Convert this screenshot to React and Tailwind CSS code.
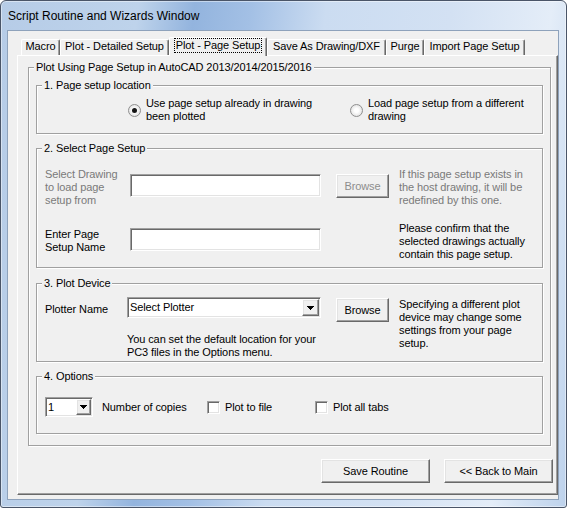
import React from "react";

const raised =
  "border border-t-white border-l-white border-r-[#696969] border-b-[#696969] shadow-[inset_-1px_-1px_0_#a0a0a0,inset_1px_1px_0_#e3e3e3]";
const sunken =
  "border border-t-[#a0a0a0] border-l-[#a0a0a0] border-r-white border-b-white shadow-[inset_1px_1px_0_#696969,inset_-1px_-1px_0_#e3e3e3]";

function Arrow() {
  return (
    <svg width="7" height="4" viewBox="0 0 7 4" shapeRendering="crispEdges">
      <path d="M0 0h7v1h-1v1h-1v1h-1v1h-1v-1h-1v-1h-1v-1h-1z" fill="#000" />
    </svg>
  );
}

function Combo({ className, text, btn }) {
  return (
    <div className={`${sunken} bg-white p-[1px] flex items-stretch ${className}`}>
      <div className="flex-1 pl-[1px] flex items-center whitespace-nowrap">{text}</div>
      <div className={`${raised} bg-[#f0f0f0] ${btn} flex items-center justify-center`}>
        <Arrow />
      </div>
    </div>
  );
}

function Btn({ className, children, disabled }) {
  return (
    <button
      type="button"
      className={`${raised} bg-[#f0f0f0] flex items-center justify-center leading-[13px] ${
        disabled ? "text-[#8d8d8d]" : "text-black"
      } ${className}`}
    >
      {children}
    </button>
  );
}

function Radio({ checked }) {
  return (
    <div className="w-[13px] h-[13px] shrink-0 rounded-full border border-[#8f8f8f] bg-[radial-gradient(circle_at_50%_50%,#ffffff_25%,#d6d6d6_100%)] flex items-center justify-center">
      {checked && <div className="w-[5px] h-[5px] rounded-full bg-[#151515]" />}
    </div>
  );
}

function Check() {
  return <div className={`${sunken} w-[13px] h-[13px] shrink-0 bg-white`} />;
}

function Group({ label, className, children }) {
  return (
    <div
      className={`border border-[#a0a0a0] shadow-[inset_1px_1px_0_#fff,1px_1px_0_#fff] ${className}`}
    >
      <div className="-mt-[7px] ml-[5px] px-[2px] w-fit bg-[#f0f0f0] leading-[13px] whitespace-nowrap">
        {label}
      </div>
      {children}
    </div>
  );
}

function Tab({ w, children }) {
  return (
    <div
      className={`${w} h-[16px] rounded-t-[2px] border-t border-l border-r border-t-white border-l-white border-r-[#696969] shadow-[inset_-1px_0_0_#a0a0a0] flex justify-center leading-[13px] pt-[0px] whitespace-nowrap`}
    >
      {children}
    </div>
  );
}

function SelTab({ w, children }) {
  return (
    <div
      className={`${w} h-[19px] -mb-[1px] rounded-t-[2px] bg-[#f0f0f0] border-t border-l border-r border-t-white border-l-white border-r-[#696969] shadow-[inset_-1px_0_0_#a0a0a0] flex justify-center whitespace-nowrap`}
    >
      <span className="h-fit border border-dotted border-black px-[1px] leading-[13px]">{children}</span>
    </div>
  );
}

export default function App() {
  return (
    <div className="w-[567px] h-[508px] overflow-hidden bg-white">
      <div className="w-[567px] h-[508px] rounded-t-[6px] rounded-b-[3px] border border-[#4a5568] bg-[linear-gradient(97deg,#b6cce7_0%,#bed3eb_22%,#93b4de_31%,#a3c0e5_40%,#cbdcf1_52%,#d3e1f3_72%,#e4edf8_88%,#bdd2ec_100%)] shadow-[inset_0_0_0_1px_rgba(255,255,255,0.45)] font-['Liberation_Sans',Arial,sans-serif] text-black">
        <div className="h-[29px] pl-[7px] flex items-center text-[12px] leading-[14px]">
          Script Routine and Wizards Window
        </div>
        <div className="ml-[6px] w-[552px] h-[470px] border border-[#8ea2bb] bg-[#f0f0f0] text-[11px] leading-[13px] tracking-[-0.1px]">
          <div className="pl-[9px] pt-[6px]">
            <div className="relative z-10 flex items-end h-[18px] pl-[4px]">
              <Tab w="w-[39px]">Macro</Tab>
              <Tab w="w-[109px]">Plot - Detailed Setup</Tab>
              <SelTab w="w-[98px]">Plot - Page Setup</SelTab>
              <Tab w="w-[119px]">Save As Drawing/DXF</Tab>
              <Tab w="w-[38px]">Purge</Tab>
              <Tab w="w-[101px]">Import Page Setup</Tab>
            </div>
            <div className="w-[541px] h-[440px] border border-t-white border-l-white border-r-[#696969] border-b-[#696969] shadow-[inset_-1px_-1px_0_#a0a0a0]">
              <div className="pl-[10px] pt-[11px]">
                <Group
                  label="Plot Using Page Setup in AutoCAD 2013/2014/2015/2016"
                  className="w-[523px] h-[379px]"
                >
                  <div className="pl-[7px] pt-[11px] flex flex-col">
                    <Group label="1. Page setup location" className="w-[507px] h-[49px]">
                      <div className="flex pt-[5px]">
                        <div className="ml-[91px] w-[222px] flex items-center gap-[5px]">
                          <Radio checked />
                          <div className="whitespace-nowrap">
                            Use page setup already in drawing
                            <br />
                            been plotted
                          </div>
                        </div>
                        <div className="flex items-center gap-[5px]">
                          <Radio />
                          <div className="whitespace-nowrap">
                            Load page setup from a different
                            <br />
                            drawing
                          </div>
                        </div>
                      </div>
                    </Group>

                    <Group label="2. Select Page Setup" className="mt-[14px] w-[507px] h-[120px]">
                      <div className="pt-[13px] pl-[8px]">
                        <div className="flex items-start">
                          <div className="w-[85px] text-[#7a7a7a] whitespace-nowrap">
                            Select Drawing
                            <br />
                            to load page
                            <br />
                            setup from
                          </div>
                          <div className={`${sunken} mt-[6px] w-[191px] h-[23px] bg-white`} />
                          <Btn disabled className="mt-[6px] ml-[15px] w-[53px] h-[24px]">
                            Browse
                          </Btn>
                          <div className="ml-[10px] text-[#7a7a7a] whitespace-nowrap">
                            If this page setup exists in
                            <br />
                            the host drawing, it will be
                            <br />
                            redefined by this one.
                          </div>
                        </div>
                        <div className="flex items-start mt-[15px]">
                          <div className="mt-[6px] w-[85px] whitespace-nowrap">
                            Enter Page
                            <br />
                            Setup Name
                          </div>
                          <div className={`${sunken} mt-[6px] w-[191px] h-[23px] bg-white`} />
                          <div className="ml-[78px] whitespace-nowrap">
                            Please confirm that the
                            <br />
                            selected drawings actually
                            <br />
                            contain this page setup.
                          </div>
                        </div>
                      </div>
                    </Group>

                    <Group label="3. Plot Device" className="mt-[15px] w-[507px] h-[79px]">
                      <div className="pt-[7px] pl-[8px] flex items-start">
                        <div className="mt-[6px] w-[82px] whitespace-nowrap">Plotter Name</div>
                        <div className="w-[194px]">
                          <Combo className="w-[194px] h-[21px]" text="Select Plotter" btn="w-[17px]" />
                          <div className="mt-[15px] whitespace-nowrap">
                            You can set the default location for your
                            <br />
                            PC3 files in the Options menu.
                          </div>
                        </div>
                        <Btn className="mt-[1px] ml-[15px] w-[53px] h-[24px]">Browse</Btn>
                        <div className="mt-[1px] ml-[10px] whitespace-nowrap">
                          Specifying a different plot
                          <br />
                          device may change some
                          <br />
                          settings from your page
                          <br />
                          setup.
                        </div>
                      </div>
                    </Group>

                    <Group label="4. Options" className="mt-[14px] w-[507px] h-[58px]">
                      <div className="pt-[14px] pl-[8px] flex items-center">
                        <Combo className="w-[48px] h-[20px]" text="1" btn="w-[15px]" />
                        <div className="ml-[9px] w-[105px] whitespace-nowrap">Number of copies</div>
                        <Check />
                        <div className="ml-[5px] w-[90px] whitespace-nowrap">Plot to file</div>
                        <Check />
                        <div className="ml-[5px] whitespace-nowrap">Plot all tabs</div>
                      </div>
                    </Group>
                  </div>
                </Group>

                <div className="flex gap-[14px] ml-[293px] mt-[13px]">
                  <Btn className="w-[109px] h-[24px]">Save Routine</Btn>
                  <Btn className="w-[109px] h-[24px]">&lt;&lt; Back to Main</Btn>
                </div>
              </div>
            </div>
          </div>
        </div>
      </div>
    </div>
  );
}
